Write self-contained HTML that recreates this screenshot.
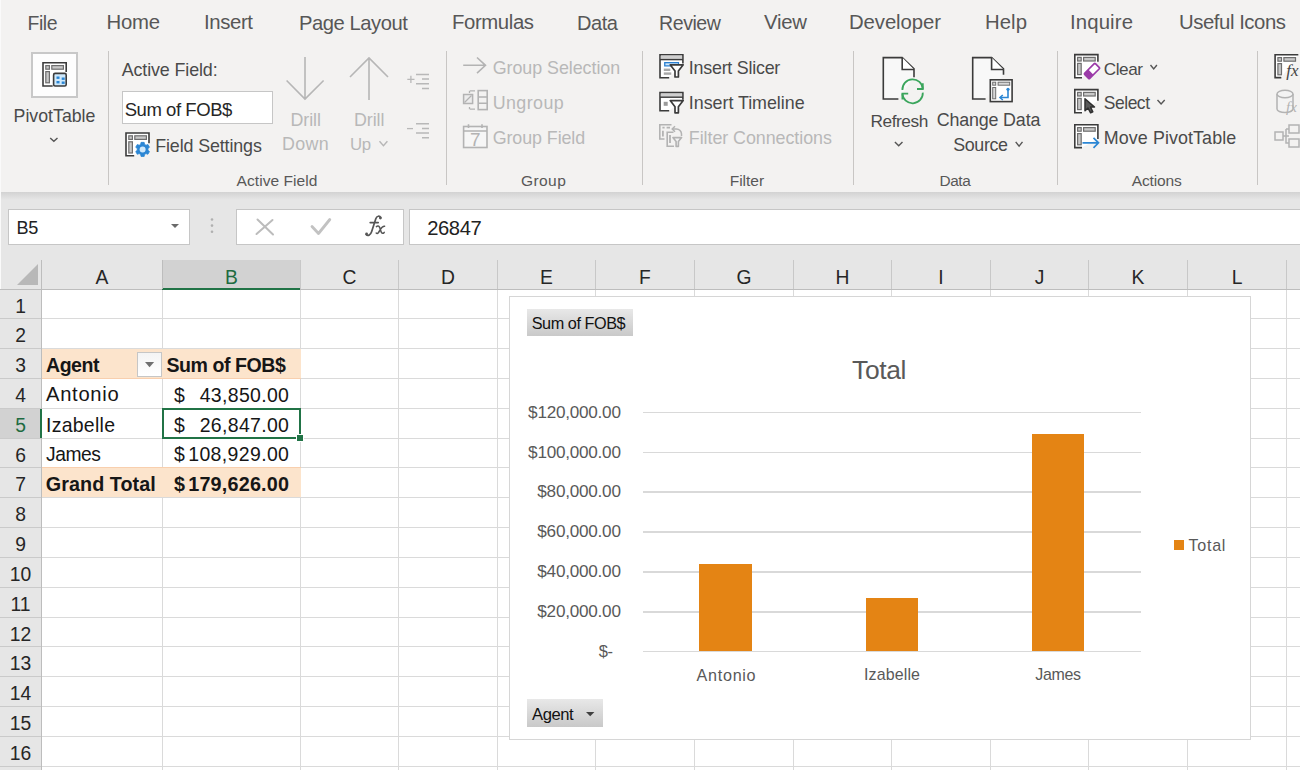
<!DOCTYPE html>
<html><head><meta charset="utf-8">
<style>
html,body{margin:0;padding:0;width:1300px;height:770px;overflow:hidden;background:#fff}
body{position:relative;font-family:"Liberation Sans",sans-serif}
.t{position:absolute;white-space:nowrap;line-height:normal}
.r{position:absolute}
</style></head><body>
<div class="r" style="left:0px;top:0px;width:1300px;height:192px;background:#f3f2f1;"></div>
<div class="r" style="left:0px;top:192px;width:1300px;height:98px;background:#e6e6e6;"></div>
<div class="r" style="left:0px;top:192px;width:1300px;height:8px;background:linear-gradient(#d2d2d2,#e6e6e6);"></div>
<div class="r" style="left:0px;top:0px;width:1px;height:770px;background:#fafafa;"></div>
<div class="t" style="left:27.50px;top:12.19px;font-size:19.46px;letter-spacing:-0.450px;color:#575757;">File</div>
<div class="t" style="left:106.50px;top:11.38px;font-size:20.35px;letter-spacing:-0.197px;color:#575757;">Home</div>
<div class="t" style="left:204.00px;top:11.38px;font-size:20.35px;letter-spacing:-0.378px;color:#575757;">Insert</div>
<div class="t" style="left:299.00px;top:11.51px;font-size:20.21px;letter-spacing:-0.450px;color:#575757;">Page Layout</div>
<div class="t" style="left:452.00px;top:11.38px;font-size:20.35px;letter-spacing:-0.402px;color:#575757;">Formulas</div>
<div class="t" style="left:577.00px;top:11.66px;font-size:20.04px;letter-spacing:-0.450px;color:#575757;">Data</div>
<div class="t" style="left:659.00px;top:12.08px;font-size:19.58px;letter-spacing:-0.450px;color:#575757;">Review</div>
<div class="t" style="left:764.00px;top:11.38px;font-size:20.35px;letter-spacing:-0.264px;color:#575757;">View</div>
<div class="t" style="left:849.00px;top:11.38px;font-size:20.35px;letter-spacing:-0.094px;color:#575757;">Developer</div>
<div class="t" style="left:985.00px;top:11.38px;font-size:20.35px;letter-spacing:0.047px;color:#575757;">Help</div>
<div class="t" style="left:1070.00px;top:11.38px;font-size:20.35px;letter-spacing:0.129px;color:#575757;">Inquire</div>
<div class="t" style="left:1179.00px;top:11.39px;font-size:20.35px;letter-spacing:-0.450px;color:#575757;">Useful Icons</div>
<div class="r" style="left:108.0px;top:51px;width:1px;height:134px;background:#c8c6c4;"></div>
<div class="r" style="left:445.8px;top:51px;width:1px;height:134px;background:#c8c6c4;"></div>
<div class="r" style="left:641.7px;top:51px;width:1px;height:134px;background:#c8c6c4;"></div>
<div class="r" style="left:853.3px;top:51px;width:1px;height:134px;background:#c8c6c4;"></div>
<div class="r" style="left:1057.0px;top:51px;width:1px;height:134px;background:#c8c6c4;"></div>
<div class="r" style="left:1257.2px;top:51px;width:1px;height:134px;background:#c8c6c4;"></div>
<div class="t" style="left:236.50px;top:172.43px;font-size:15.55px;letter-spacing:0.057px;color:#585858;">Active Field</div>
<div class="t" style="left:521.00px;top:171.63px;font-size:15.55px;letter-spacing:0.395px;color:#585858;">Group</div>
<div class="t" style="left:729.70px;top:171.63px;font-size:15.55px;letter-spacing:-0.011px;color:#585858;">Filter</div>
<div class="t" style="left:939.60px;top:171.76px;font-size:15.40px;letter-spacing:-0.450px;color:#585858;">Data</div>
<div class="t" style="left:1131.70px;top:171.63px;font-size:15.55px;letter-spacing:-0.149px;color:#585858;">Actions</div>
<div class="r" style="left:31px;top:52.4px;width:47px;height:45.2px;background:#fdfdfd;box-sizing:border-box;border:2px solid #c8c8c8;"></div>
<div class="t" style="left:13.60px;top:106.45px;font-size:17.73px;letter-spacing:0.009px;color:#4a4a4a;">PivotTable</div>
<div class="t" style="left:121.70px;top:60.22px;font-size:17.88px;letter-spacing:-0.114px;color:#4a4a4a;">Active Field:</div>
<div class="r" style="left:121.7px;top:91.4px;width:151.7px;height:33px;background:#fff;box-sizing:border-box;border:1px solid #c6c6c6;"></div>
<div class="t" style="left:124.70px;top:98.74px;font-size:18.52px;letter-spacing:-0.450px;color:#262626;">Sum of FOB$</div>
<div class="t" style="left:155.20px;top:136.42px;font-size:17.88px;letter-spacing:-0.117px;color:#4a4a4a;">Field Settings</div>
<div class="t" style="left:290.50px;top:109.62px;font-size:17.88px;letter-spacing:-0.071px;color:#b8b8b8;">Drill</div>
<div class="t" style="left:282.00px;top:134.42px;font-size:17.88px;letter-spacing:0.362px;color:#b8b8b8;">Down</div>
<div class="t" style="left:354.00px;top:109.62px;font-size:17.88px;letter-spacing:-0.071px;color:#b8b8b8;">Drill</div>
<div class="t" style="left:350.00px;top:135.41px;font-size:16.78px;letter-spacing:-0.450px;color:#b8b8b8;">Up</div>
<div class="t" style="left:492.70px;top:58.42px;font-size:17.88px;letter-spacing:-0.043px;color:#b8b8b8;">Group Selection</div>
<div class="t" style="left:492.70px;top:92.72px;font-size:17.88px;letter-spacing:0.420px;color:#b8b8b8;">Ungroup</div>
<div class="t" style="left:492.70px;top:127.82px;font-size:17.88px;letter-spacing:-0.081px;color:#b8b8b8;">Group Field</div>
<div class="t" style="left:688.80px;top:58.42px;font-size:17.88px;letter-spacing:-0.231px;color:#4a4a4a;">Insert Slicer</div>
<div class="t" style="left:688.80px;top:92.72px;font-size:17.88px;letter-spacing:-0.024px;color:#4a4a4a;">Insert Timeline</div>
<div class="t" style="left:688.80px;top:127.82px;font-size:17.88px;letter-spacing:-0.052px;color:#b8b8b8;">Filter Connections</div>
<div class="t" style="left:870.50px;top:110.76px;font-size:17.28px;letter-spacing:-0.450px;color:#4a4a4a;">Refresh</div>
<div class="t" style="left:936.70px;top:110.22px;font-size:17.88px;letter-spacing:-0.157px;color:#4a4a4a;">Change Data</div>
<div class="t" style="left:953.30px;top:135.02px;font-size:17.88px;letter-spacing:-0.387px;color:#4a4a4a;">Source</div>
<div class="t" style="left:1103.80px;top:59.07px;font-size:17.15px;letter-spacing:-0.450px;color:#4a4a4a;">Clear</div>
<div class="t" style="left:1103.80px;top:93.12px;font-size:17.43px;letter-spacing:-0.450px;color:#4a4a4a;">Select</div>
<div class="t" style="left:1103.80px;top:127.82px;font-size:17.88px;letter-spacing:0.095px;color:#4a4a4a;">Move PivotTable</div>
<div class="r" style="left:8px;top:209px;width:181.6px;height:36.2px;background:#fff;box-sizing:border-box;border:1px solid #c6c6c6;"></div>
<div class="t" style="left:16.60px;top:217.91px;font-size:18.11px;letter-spacing:-0.450px;color:#222;">B5</div>
<div class="r" style="left:236.2px;top:209px;width:167.7px;height:36px;background:#fff;box-sizing:border-box;border:1px solid #c6c6c6;"></div>
<div class="r" style="left:409px;top:209px;width:900px;height:35.6px;background:#fff;box-sizing:border-box;border:1px solid #c6c6c6;"></div>
<div class="t" style="left:427.30px;top:216.51px;font-size:20.21px;letter-spacing:-0.450px;color:#222;">26847</div>
<div class="r" style="left:41.5px;top:290px;width:1300px;height:480px;background:#fff;"></div>
<div class="r" style="left:0px;top:290px;width:41.5px;height:480px;background:#e6e6e6;"></div>
<div class="r" style="left:42px;top:318px;width:1300px;height:1px;background:#dadada;"></div>
<div class="r" style="left:0px;top:318px;width:41px;height:1px;background:#cacaca;"></div>
<div class="r" style="left:42px;top:348px;width:1300px;height:1px;background:#dadada;"></div>
<div class="r" style="left:0px;top:348px;width:41px;height:1px;background:#cacaca;"></div>
<div class="r" style="left:42px;top:378px;width:1300px;height:1px;background:#dadada;"></div>
<div class="r" style="left:0px;top:378px;width:41px;height:1px;background:#cacaca;"></div>
<div class="r" style="left:42px;top:408px;width:1300px;height:1px;background:#dadada;"></div>
<div class="r" style="left:0px;top:408px;width:41px;height:1px;background:#cacaca;"></div>
<div class="r" style="left:42px;top:438px;width:1300px;height:1px;background:#dadada;"></div>
<div class="r" style="left:0px;top:438px;width:41px;height:1px;background:#cacaca;"></div>
<div class="r" style="left:42px;top:467px;width:1300px;height:1px;background:#dadada;"></div>
<div class="r" style="left:0px;top:467px;width:41px;height:1px;background:#cacaca;"></div>
<div class="r" style="left:42px;top:497px;width:1300px;height:1px;background:#dadada;"></div>
<div class="r" style="left:0px;top:497px;width:41px;height:1px;background:#cacaca;"></div>
<div class="r" style="left:42px;top:527px;width:1300px;height:1px;background:#dadada;"></div>
<div class="r" style="left:0px;top:527px;width:41px;height:1px;background:#cacaca;"></div>
<div class="r" style="left:42px;top:557px;width:1300px;height:1px;background:#dadada;"></div>
<div class="r" style="left:0px;top:557px;width:41px;height:1px;background:#cacaca;"></div>
<div class="r" style="left:42px;top:587px;width:1300px;height:1px;background:#dadada;"></div>
<div class="r" style="left:0px;top:587px;width:41px;height:1px;background:#cacaca;"></div>
<div class="r" style="left:42px;top:617px;width:1300px;height:1px;background:#dadada;"></div>
<div class="r" style="left:0px;top:617px;width:41px;height:1px;background:#cacaca;"></div>
<div class="r" style="left:42px;top:646px;width:1300px;height:1px;background:#dadada;"></div>
<div class="r" style="left:0px;top:646px;width:41px;height:1px;background:#cacaca;"></div>
<div class="r" style="left:42px;top:676px;width:1300px;height:1px;background:#dadada;"></div>
<div class="r" style="left:0px;top:676px;width:41px;height:1px;background:#cacaca;"></div>
<div class="r" style="left:42px;top:706px;width:1300px;height:1px;background:#dadada;"></div>
<div class="r" style="left:0px;top:706px;width:41px;height:1px;background:#cacaca;"></div>
<div class="r" style="left:42px;top:736px;width:1300px;height:1px;background:#dadada;"></div>
<div class="r" style="left:0px;top:736px;width:41px;height:1px;background:#cacaca;"></div>
<div class="r" style="left:42px;top:766px;width:1300px;height:1px;background:#dadada;"></div>
<div class="r" style="left:0px;top:766px;width:41px;height:1px;background:#cacaca;"></div>
<div class="r" style="left:162px;top:290px;width:1px;height:480px;background:#dadada;"></div>
<div class="r" style="left:162px;top:260px;width:1px;height:30px;background:#c8c8c8;"></div>
<div class="r" style="left:300px;top:290px;width:1px;height:480px;background:#dadada;"></div>
<div class="r" style="left:300px;top:260px;width:1px;height:30px;background:#c8c8c8;"></div>
<div class="r" style="left:398px;top:290px;width:1px;height:480px;background:#dadada;"></div>
<div class="r" style="left:398px;top:260px;width:1px;height:30px;background:#c8c8c8;"></div>
<div class="r" style="left:497px;top:290px;width:1px;height:480px;background:#dadada;"></div>
<div class="r" style="left:497px;top:260px;width:1px;height:30px;background:#c8c8c8;"></div>
<div class="r" style="left:595px;top:290px;width:1px;height:480px;background:#dadada;"></div>
<div class="r" style="left:595px;top:260px;width:1px;height:30px;background:#c8c8c8;"></div>
<div class="r" style="left:694px;top:290px;width:1px;height:480px;background:#dadada;"></div>
<div class="r" style="left:694px;top:260px;width:1px;height:30px;background:#c8c8c8;"></div>
<div class="r" style="left:793px;top:290px;width:1px;height:480px;background:#dadada;"></div>
<div class="r" style="left:793px;top:260px;width:1px;height:30px;background:#c8c8c8;"></div>
<div class="r" style="left:891px;top:290px;width:1px;height:480px;background:#dadada;"></div>
<div class="r" style="left:891px;top:260px;width:1px;height:30px;background:#c8c8c8;"></div>
<div class="r" style="left:990px;top:290px;width:1px;height:480px;background:#dadada;"></div>
<div class="r" style="left:990px;top:260px;width:1px;height:30px;background:#c8c8c8;"></div>
<div class="r" style="left:1088px;top:290px;width:1px;height:480px;background:#dadada;"></div>
<div class="r" style="left:1088px;top:260px;width:1px;height:30px;background:#c8c8c8;"></div>
<div class="r" style="left:1187px;top:290px;width:1px;height:480px;background:#dadada;"></div>
<div class="r" style="left:1187px;top:260px;width:1px;height:30px;background:#c8c8c8;"></div>
<div class="r" style="left:1286px;top:290px;width:1px;height:480px;background:#dadada;"></div>
<div class="r" style="left:1286px;top:260px;width:1px;height:30px;background:#c8c8c8;"></div>
<div class="r" style="left:0px;top:289px;width:1300px;height:1px;background:#bdbdbd;"></div>
<div class="r" style="left:41px;top:260px;width:1px;height:510px;background:#bdbdbd;"></div>
<div class="r" style="left:162px;top:260px;width:138px;height:29px;background:#d2d2d2;"></div>
<div class="r" style="left:162px;top:287.5px;width:138px;height:2px;background:#217346;"></div>
<div class="r" style="left:162px;top:260px;width:1px;height:29px;background:#bdbdbd;"></div>
<div class="r" style="left:0px;top:409px;width:41px;height:29px;background:#d2d2d2;"></div>
<div class="r" style="left:39.5px;top:409px;width:2px;height:29px;background:#217346;"></div>
<svg class="r" style="left:17px;top:264px" width="22" height="22"><polygon points="21,0 21,21 0,21" fill="#b8b8b8"/></svg>
<div class="t" style="left:72.0px;width:60px;text-align:center;top:266.8px;font-size:19.3px;color:#262626">A</div>
<div class="t" style="left:201.5px;width:60px;text-align:center;top:266.8px;font-size:19.3px;color:#1e6b41">B</div>
<div class="t" style="left:319.5px;width:60px;text-align:center;top:266.8px;font-size:19.3px;color:#262626">C</div>
<div class="t" style="left:418.0px;width:60px;text-align:center;top:266.8px;font-size:19.3px;color:#262626">D</div>
<div class="t" style="left:516.5px;width:60px;text-align:center;top:266.8px;font-size:19.3px;color:#262626">E</div>
<div class="t" style="left:615.0px;width:60px;text-align:center;top:266.8px;font-size:19.3px;color:#262626">F</div>
<div class="t" style="left:714.0px;width:60px;text-align:center;top:266.8px;font-size:19.3px;color:#262626">G</div>
<div class="t" style="left:812.5px;width:60px;text-align:center;top:266.8px;font-size:19.3px;color:#262626">H</div>
<div class="t" style="left:911.0px;width:60px;text-align:center;top:266.8px;font-size:19.3px;color:#262626">I</div>
<div class="t" style="left:1009.5px;width:60px;text-align:center;top:266.8px;font-size:19.3px;color:#262626">J</div>
<div class="t" style="left:1108.0px;width:60px;text-align:center;top:266.8px;font-size:19.3px;color:#262626">K</div>
<div class="t" style="left:1207.0px;width:60px;text-align:center;top:266.8px;font-size:19.3px;color:#262626">L</div>
<div class="t" style="left:0px;width:41px;text-align:center;top:295.5px;font-size:19.3px;color:#262626">1</div>
<div class="t" style="left:0px;width:41px;text-align:center;top:325.0px;font-size:19.3px;color:#262626">2</div>
<div class="t" style="left:0px;width:41px;text-align:center;top:355.0px;font-size:19.3px;color:#262626">3</div>
<div class="t" style="left:0px;width:41px;text-align:center;top:385.0px;font-size:19.3px;color:#262626">4</div>
<div class="t" style="left:0px;width:41px;text-align:center;top:415.0px;font-size:19.3px;color:#1e6b41">5</div>
<div class="t" style="left:0px;width:41px;text-align:center;top:444.5px;font-size:19.3px;color:#262626">6</div>
<div class="t" style="left:0px;width:41px;text-align:center;top:474.0px;font-size:19.3px;color:#262626">7</div>
<div class="t" style="left:0px;width:41px;text-align:center;top:504.0px;font-size:19.3px;color:#262626">8</div>
<div class="t" style="left:0px;width:41px;text-align:center;top:534.0px;font-size:19.3px;color:#262626">9</div>
<div class="t" style="left:0px;width:41px;text-align:center;top:564.0px;font-size:19.3px;color:#262626">10</div>
<div class="t" style="left:0px;width:41px;text-align:center;top:594.0px;font-size:19.3px;color:#262626">11</div>
<div class="t" style="left:0px;width:41px;text-align:center;top:623.5px;font-size:19.3px;color:#262626">12</div>
<div class="t" style="left:0px;width:41px;text-align:center;top:653.0px;font-size:19.3px;color:#262626">13</div>
<div class="t" style="left:0px;width:41px;text-align:center;top:683.0px;font-size:19.3px;color:#262626">14</div>
<div class="t" style="left:0px;width:41px;text-align:center;top:713.0px;font-size:19.3px;color:#262626">15</div>
<div class="t" style="left:0px;width:41px;text-align:center;top:743.0px;font-size:19.3px;color:#262626">16</div>
<div class="r" style="left:42px;top:349px;width:259px;height:30px;background:#fce4cc;border-bottom:1px solid #f8cfae;box-sizing:border-box;"></div>
<div class="r" style="left:42px;top:467px;width:259px;height:30px;background:#fce4cc;border-top:1px solid #f8cfae;box-sizing:border-box;"></div>
<div class="r" style="left:136.6px;top:352.3px;width:25px;height:24.7px;background:linear-gradient(#f4f4f4,#fff);box-sizing:border-box;border:1px solid #c6c6c6;"></div>
<svg class="r" style="left:144.7px;top:362px" width="10" height="6"><polygon points="0,0 9.1,0 4.55,5.3" fill="#707070"/></svg>
<div class="t" style="left:46.00px;top:354.13px;font-size:19.52px;letter-spacing:-0.450px;color:#161616;font-weight:700;">Agent</div>
<div class="t" style="left:166.40px;top:354.47px;font-size:19.59px;letter-spacing:-0.450px;color:#161616;font-weight:700;">Sum of FOB$</div>
<div class="t" style="left:46.00px;top:383.40px;font-size:20.22px;letter-spacing:0.700px;color:#161616;">Antonio</div>
<div class="t" style="left:46.00px;top:413.87px;font-size:19.48px;letter-spacing:0.266px;color:#161616;">Izabelle</div>
<div class="t" style="left:46.00px;top:443.85px;font-size:19.29px;letter-spacing:-0.450px;color:#161616;">James</div>
<div class="t" style="left:45.80px;top:473.11px;font-size:19.77px;letter-spacing:0.055px;color:#161616;font-weight:700;">Grand Total</div>
<div class="t" style="left:174.00px;top:383.67px;font-size:19.48px;letter-spacing:0.000px;color:#161616;">$</div>
<div class="t" style="left:199.70px;top:383.67px;font-size:19.48px;letter-spacing:0.331px;color:#161616;">43,850.00</div>
<div class="t" style="left:174.00px;top:413.57px;font-size:19.48px;letter-spacing:0.000px;color:#161616;">$</div>
<div class="t" style="left:199.70px;top:413.57px;font-size:19.48px;letter-spacing:0.331px;color:#161616;">26,847.00</div>
<div class="t" style="left:174.00px;top:443.47px;font-size:19.48px;letter-spacing:0.000px;color:#161616;">$</div>
<div class="t" style="left:188.20px;top:443.47px;font-size:19.48px;letter-spacing:0.369px;color:#161616;">108,929.00</div>
<div class="t" style="left:174.00px;top:472.81px;font-size:19.77px;letter-spacing:0.000px;color:#161616;font-weight:700;">$</div>
<div class="t" style="left:188.20px;top:472.81px;font-size:19.77px;letter-spacing:0.207px;color:#161616;font-weight:700;">179,626.00</div>
<div class="r" style="left:161.6px;top:407.5px;width:139.9px;height:31.8px;background:transparent;box-sizing:border-box;border:2px solid #217346;"></div>
<div class="r" style="left:297.4px;top:435.2px;width:5.6px;height:5.6px;background:#217346;outline:1px solid #fff;"></div>
<div class="r" style="left:509px;top:296px;width:741.5px;height:443.5px;background:#fff;box-sizing:border-box;border:1.5px solid #d6d6d6;"></div>
<div class="r" style="left:527px;top:309.2px;width:106.1px;height:26.5px;background:linear-gradient(#e8e8e8,#c9c9c9);"></div>
<div class="t" style="left:531.70px;top:313.99px;font-size:16.26px;letter-spacing:-0.450px;color:#111;">Sum of FOB$</div>
<div class="t" style="left:852.00px;top:355.26px;font-size:26.45px;letter-spacing:-0.342px;color:#595959;">Total</div>
<div class="r" style="left:643px;top:411.7px;width:498px;height:1.6px;background:#d9d9d9;"></div>
<div class="t" style="left:528.10px;top:401.78px;font-size:17.15px;letter-spacing:-0.248px;color:#595959;">$120,000.00</div>
<div class="r" style="left:643px;top:451.55px;width:498px;height:1.6px;background:#d9d9d9;"></div>
<div class="t" style="left:528.10px;top:441.63px;font-size:17.15px;letter-spacing:-0.248px;color:#595959;">$100,000.00</div>
<div class="r" style="left:643px;top:491.4px;width:498px;height:1.6px;background:#d9d9d9;"></div>
<div class="t" style="left:537.30px;top:481.48px;font-size:17.15px;letter-spacing:-0.238px;color:#595959;">$80,000.00</div>
<div class="r" style="left:643px;top:531.25px;width:498px;height:1.6px;background:#d9d9d9;"></div>
<div class="t" style="left:537.30px;top:521.33px;font-size:17.15px;letter-spacing:-0.238px;color:#595959;">$60,000.00</div>
<div class="r" style="left:643px;top:571.1px;width:498px;height:1.6px;background:#d9d9d9;"></div>
<div class="t" style="left:537.30px;top:561.18px;font-size:17.15px;letter-spacing:-0.238px;color:#595959;">$40,000.00</div>
<div class="r" style="left:643px;top:610.95px;width:498px;height:1.6px;background:#d9d9d9;"></div>
<div class="t" style="left:537.30px;top:601.03px;font-size:17.15px;letter-spacing:-0.238px;color:#595959;">$20,000.00</div>
<div class="r" style="left:643px;top:650.7px;width:498px;height:1.6px;background:#d9d9d9;"></div>
<div class="t" style="left:598.80px;top:641.59px;font-size:16.48px;letter-spacing:-0.450px;color:#595959;">$-</div>
<div class="r" style="left:699.2px;top:564.13px;width:52.6px;height:87.37px;background:#e48414;"></div>
<div class="r" style="left:865.7px;top:598.01px;width:52.6px;height:53.49px;background:#e48414;"></div>
<div class="r" style="left:1031.9px;top:434.46px;width:52.6px;height:217.04px;background:#e48414;"></div>
<div class="t" style="left:696.60px;top:665.78px;font-size:16.16px;letter-spacing:0.700px;color:#595959;">Antonio</div>
<div class="t" style="left:864.00px;top:665.93px;font-size:15.99px;letter-spacing:0.127px;color:#595959;">Izabelle</div>
<div class="t" style="left:1035.30px;top:666.13px;font-size:15.99px;letter-spacing:-0.346px;color:#595959;">James</div>
<div class="r" style="left:1173.8px;top:540.3px;width:9.8px;height:9.8px;background:#e48414;"></div>
<div class="t" style="left:1188.60px;top:536.23px;font-size:16.10px;letter-spacing:0.700px;color:#595959;">Total</div>
<div class="r" style="left:526.9px;top:699.3px;width:75.7px;height:27.5px;background:linear-gradient(#e8e8e8,#c9c9c9);"></div>
<div class="t" style="left:532.00px;top:704.97px;font-size:16.61px;letter-spacing:-0.450px;color:#111;">Agent</div>
<svg class="r" style="left:585.6px;top:712px" width="9" height="5"><polygon points="0,0 8.4,0 4.2,4.2" fill="#404040"/></svg>
<svg class="r" style="left:0;top:0" width="1300" height="770"><path d="M52.7,86 H43.0 V62.8 H66.2 V72" fill="#fff" stroke="#3b3b3b" stroke-width="1.6"/><rect x="45.800000000000004" y="65.6" width="3.6" height="3.6" fill="#c9c9c9" stroke="#6e6e6e" stroke-width="1.2"/><rect x="51.800000000000004" y="65.6" width="11.6" height="3.6" fill="#c9c9c9" stroke="#6e6e6e" stroke-width="1.2"/><rect x="45.800000000000004" y="71.6" width="3.6" height="11.2" fill="#c9c9c9" stroke="#6e6e6e" stroke-width="1.2"/><rect x="53.6" y="73.4" width="12.6" height="12.6" rx="1.5" fill="#cfe9fb" stroke="#3b3b3b" stroke-width="1.6"/><rect x="56.5" y="76.5" width="3" height="2.4" fill="#2b86d4"/><rect x="56.5" y="81" width="3" height="2.4" fill="#2b86d4"/><rect x="61.7" y="77.5" width="3" height="2.4" fill="#2b86d4"/><rect x="61.7" y="81.5" width="3" height="2.4" fill="#2b86d4"/><path d="M134.2,155.79999999999998 H126.0 V133.0 H149.0 V143.2" fill="#fff" stroke="#3b3b3b" stroke-width="1.6"/><rect x="128.8" y="135.79999999999998" width="3.6" height="3.6" fill="#c9c9c9" stroke="#6e6e6e" stroke-width="1.2"/><rect x="134.8" y="135.79999999999998" width="11.6" height="3.6" fill="#c9c9c9" stroke="#6e6e6e" stroke-width="1.2"/><rect x="128.8" y="141.79999999999998" width="3.6" height="11.2" fill="#c9c9c9" stroke="#6e6e6e" stroke-width="1.2"/><polygon points="140.70,144.35 141.03,142.37 144.17,142.37 144.50,144.35 146.03,145.23 147.90,144.53 149.47,147.25 147.93,148.52 147.93,150.28 149.47,151.55 147.90,154.27 146.03,153.57 144.50,154.45 144.17,156.43 141.03,156.43 140.70,154.45 139.17,153.57 137.30,154.27 135.73,151.55 137.27,150.28 137.27,148.52 135.73,147.25 137.30,144.53 139.17,145.23" fill="#2b86d4" stroke="#2b86d4" stroke-width="0.8" stroke-linejoin="round"/><circle cx="142.6" cy="149.4" r="3" fill="#cfe8fb"/><path d="M305,57 V99 M286.6,80.5 L305,99 L323.6,80.5" fill="none" stroke="#b6b6b6" stroke-width="1.6"/><path d="M369,100 V58 M350,77 L369,58 L388,77" fill="none" stroke="#b6b6b6" stroke-width="1.6"/><path d="M379.5,141.3 L383.45,145.8 L387.4,141.3" fill="none" stroke="#b6b6b6" stroke-width="1.4"/><path d="M407.3,79.3 H414.5 M410.9,75.7 V82.9" stroke="#b8b8b8" stroke-width="1.3"/><path d="M416,74.6 H429 M422,79.1 H429 M416,83.8 H429 M422,88.4 H429" stroke="#b8b8b8" stroke-width="1.5"/><path d="M407,128.6 H413" stroke="#b8b8b8" stroke-width="1.3"/><path d="M416,123.7 H429 M422,128.4 H429 M416,133.1 H429 M422,137.8 H429" stroke="#b8b8b8" stroke-width="1.5"/><path d="M50.2,138.0 L53.85,141.3 L57.5,138.0" fill="none" stroke="#555" stroke-width="1.4"/><path d="M463.2,65.3 H485.5 M477,57.5 L485.5,65.3 L477,73.2" fill="none" stroke="#b3b3b3" stroke-width="1.6"/><rect x="463.6" y="94.5" width="9" height="9" fill="#ececec" stroke="#b3b3b3" stroke-width="1.5"/><path d="M464.5,102.5 L471.5,95.5" stroke="#b3b3b3" stroke-width="1.3"/><path d="M470,90.8 H475 M470,109.2 H475 M469.5,90.8 V93 M469.5,107 V109.2" stroke="#b3b3b3" stroke-width="1.3" fill="none"/><rect x="478.2" y="90.6" width="9" height="19" fill="none" stroke="#b3b3b3" stroke-width="1.6"/><path d="M478.2,97 H487.2 M478.2,103.3 H487.2" stroke="#b3b3b3" stroke-width="1.5"/><rect x="463.6" y="126.5" width="23.4" height="21" fill="#f6f6f6" stroke="#b3b3b3" stroke-width="1.6"/><path d="M463.6,131 H487 M468.5,124.2 V128 M482,124.2 V128" stroke="#b3b3b3" stroke-width="1.6"/><text x="475.3" y="146.2" font-family="Liberation Sans" font-size="19" fill="#b3b3b3" text-anchor="middle">7</text><path d="M669.2,77.7 H660.0 V54.8 H682.9000000000001 V63.5" fill="#fff" stroke="#3b3b3b" stroke-width="1.6"/><rect x="660.8000000000001" y="55.6" width="21.3" height="4" fill="#cfcfcf"/><path d="M660.0,59.6 H682.9000000000001" stroke="#3b3b3b" stroke-width="1.4"/><rect x="664.1" y="62" width="15" height="4.5" fill="#2b7fd0"/><rect x="665.4000000000001" y="63.3" width="12.5" height="2" fill="#cde6fa"/><rect x="663.8000000000001" y="68.6" width="6.5" height="2.4" fill="#a8a8a8"/><rect x="663.8000000000001" y="72.4" width="7.5" height="2.4" fill="#a8a8a8"/><path d="M670.2,64.8 H683.2 L678.4000000000001,71.0 V77.0 H675.0 V71.0 Z" fill="#fff" stroke="#3b3b3b" stroke-width="1.7" stroke-linejoin="round"/><path d="M669.2,110.8 H660.0 V92.6 H682.9000000000001 V99.8" fill="#fff" stroke="#3b3b3b" stroke-width="1.6"/><rect x="660.8000000000001" y="93.39999999999999" width="21.3" height="3.8" fill="#cfcfcf"/><path d="M660.0,97.2 H682.9000000000001" stroke="#3b3b3b" stroke-width="1.4"/><rect x="663.7" y="101.8" width="4" height="4" fill="#9a9a9a"/><path d="M670.2,100.6 H683.2 L678.4000000000001,106.8 V112.8 H675.0 V106.8 Z" fill="#fff" stroke="#3b3b3b" stroke-width="1.7" stroke-linejoin="round"/><path d="M664.5,139 H659.8 V124.8 H671.5" fill="none" stroke="#b3b3b3" stroke-width="1.6"/><path d="M662.4,127.6 H664.6 M666.6,127.6 H670 M662.9,130.8 V136.5" stroke="#b3b3b3" stroke-width="1.8"/><path d="M674,146.2 H667.2 V132.2 H673.5" fill="none" stroke="#b3b3b3" stroke-width="1.6"/><path d="M670,135 V143" stroke="#b3b3b3" stroke-width="1.8"/><path d="M672.3,129 H676.5 A5,5 0 0 1 681.5,134 V136" fill="none" stroke="#b3b3b3" stroke-width="1.5"/><path d="M675,126.2 L672.2,129 L675,131.8" fill="none" stroke="#b3b3b3" stroke-width="1.5"/><path d="M672.9,137.6 H681.6 L678.4,141.6 V146.4 H676.1 V141.6 Z" fill="#f3f3f3" stroke="#b3b3b3" stroke-width="1.6" stroke-linejoin="round"/><path d="M898.4,99 H883.3 V57.6 H902.2 L914,68.8 V77.3" fill="#f8f8f8" stroke="#3b3b3b" stroke-width="1.6" stroke-linejoin="miter"/><path d="M902.2,57.6 V69.5 H914" fill="#fff" stroke="#3b3b3b" stroke-width="1.6"/><path d="M902.4,90 A10.2,10.2 0 0 1 922.8,89" fill="none" stroke="#3aa55c" stroke-width="1.8"/><path d="M917,89 H922.8 V83.2" fill="none" stroke="#3aa55c" stroke-width="1.8"/><path d="M922.8,92.6 A10.2,10.2 0 0 1 902.4,93.6" fill="none" stroke="#3aa55c" stroke-width="1.8"/><path d="M908.2,93.6 H902.4 V99.4" fill="none" stroke="#3aa55c" stroke-width="1.8"/><path d="M894.9,141.9 L898.7,145.8 L902.5,141.9" fill="none" stroke="#555" stroke-width="1.4"/><path d="M985.6,99 H972.7 V57.6 H991.6 L1003.5,68.8 V74.8" fill="#f8f8f8" stroke="#3b3b3b" stroke-width="1.6"/><path d="M991.6,57.6 V69.5 H1003.5" fill="#fff" stroke="#3b3b3b" stroke-width="1.6"/><rect x="990.3" y="79.8" width="21.8" height="21.8" fill="#fff" stroke="#3b3b3b" stroke-width="1.6"/><rect x="992.7" y="82.2" width="3" height="3" fill="#d8d8d8" stroke="#6e6e6e" stroke-width="1"/><rect x="998.1" y="82.2" width="11.6" height="3" fill="#d8d8d8" stroke="#6e6e6e" stroke-width="1"/><rect x="992.7" y="87.5" width="3" height="11.3" fill="#d8d8d8" stroke="#6e6e6e" stroke-width="1"/><path d="M1008,89.5 V97.5 H1000.5" fill="none" stroke="#2b86d4" stroke-width="1.6"/><circle cx="1008" cy="89.3" r="1.6" fill="#2b86d4"/><path d="M1002.8,95 L1000,97.5 L1002.8,100" fill="none" stroke="#2b86d4" stroke-width="1.6"/><path d="M1015.7,141.9 L1019.1,146.2 L1022.5,141.9" fill="none" stroke="#555" stroke-width="1.4"/><path d="M1082,77.69999999999999 H1074.8 V54.599999999999994 H1097.9 V61.8" fill="#fff" stroke="#3b3b3b" stroke-width="1.6"/><rect x="1077.6" y="57.4" width="3.6" height="3.6" fill="#c9c9c9" stroke="#6e6e6e" stroke-width="1.2"/><rect x="1083.6" y="57.4" width="11.6" height="3.6" fill="#c9c9c9" stroke="#6e6e6e" stroke-width="1.2"/><rect x="1077.6" y="63.4" width="3.6" height="11.2" fill="#c9c9c9" stroke="#6e6e6e" stroke-width="1.2"/><g transform="translate(1092,71) rotate(-45)"><rect x="-7.6" y="-3.6" width="15.2" height="7.2" rx="0.8" fill="#fff" stroke="#9b3aa8" stroke-width="1.7"/><rect x="-7.6" y="-3.6" width="6" height="7.2" fill="#9b3aa8"/></g><path d="M1150.5,65.0 L1153.7,68.9 L1156.9,65.0" fill="none" stroke="#555" stroke-width="1.4"/><path d="M1082,112.69999999999999 H1074.8 V89.6 H1097.9 V100.8" fill="#fff" stroke="#3b3b3b" stroke-width="1.6"/><rect x="1077.6" y="92.39999999999999" width="3.6" height="3.6" fill="#c9c9c9" stroke="#6e6e6e" stroke-width="1.2"/><rect x="1083.6" y="92.39999999999999" width="11.6" height="3.6" fill="#c9c9c9" stroke="#6e6e6e" stroke-width="1.2"/><rect x="1077.6" y="98.39999999999999" width="3.6" height="11.2" fill="#c9c9c9" stroke="#6e6e6e" stroke-width="1.2"/><path d="M1085,98.8 V110.8 L1088,108.0 L1090.6,112.8 L1092.8,111.8 L1090.5,107.1 H1094.5 Z" fill="#5a5a5a" stroke="#303030" stroke-width="1.5" stroke-linejoin="round"/><path d="M1157.5,100.0 L1161.1,103.9 L1164.7,100.0" fill="none" stroke="#555" stroke-width="1.4"/><path d="M1082,147.6 H1074.8 V124.8 H1097.9 V139" fill="#fff" stroke="#3b3b3b" stroke-width="1.6"/><rect x="1077.6" y="127.6" width="3.6" height="3.6" fill="#c9c9c9" stroke="#6e6e6e" stroke-width="1.2"/><rect x="1083.6" y="127.6" width="11.6" height="3.6" fill="#c9c9c9" stroke="#6e6e6e" stroke-width="1.2"/><rect x="1077.6" y="133.6" width="3.6" height="11.2" fill="#c9c9c9" stroke="#6e6e6e" stroke-width="1.2"/><path d="M1082.5,142.8 H1098.5 M1093.5,137.8 L1098.5,142.8 L1093.5,147.8" fill="none" stroke="#2b86d4" stroke-width="1.7"/><path d="M1281.3,77.6 H1275.1 V54.8 H1298.3" fill="#fff" stroke="#3b3b3b" stroke-width="1.6"/><rect x="1277.8999999999999" y="57.6" width="3.6" height="3.6" fill="#c9c9c9" stroke="#6e6e6e" stroke-width="1.2"/><rect x="1283.8999999999999" y="57.6" width="11.6" height="3.6" fill="#c9c9c9" stroke="#6e6e6e" stroke-width="1.2"/><rect x="1277.8999999999999" y="63.6" width="3.6" height="11.2" fill="#c9c9c9" stroke="#6e6e6e" stroke-width="1.2"/><text x="1286.3" y="76" font-family="Liberation Serif" font-style="italic" font-size="17" fill="#444">fx</text><path d="M1277,94 V109 A8,3.5 0 0 0 1293,109 V94" fill="#f3f3f3" stroke="#b3b3b3" stroke-width="1.5"/><ellipse cx="1285" cy="94" rx="8" ry="3.8" fill="#f3f3f3" stroke="#b3b3b3" stroke-width="1.5"/><text x="1286" y="112" font-family="Liberation Serif" font-style="italic" font-size="15" fill="#b3b3b3">fx</text><rect x="1275" y="132" width="8" height="8" fill="none" stroke="#b3b3b3" stroke-width="1.5"/><rect x="1289" y="125" width="10" height="8" fill="none" stroke="#b3b3b3" stroke-width="1.5"/><rect x="1289" y="139" width="10" height="8" fill="none" stroke="#b3b3b3" stroke-width="1.5"/><path d="M1283,136 H1289 M1286,129 V143 H1289 M1286,129 H1289" fill="none" stroke="#b3b3b3" stroke-width="1.5"/><polygon points="171,224 179,224 175,228" fill="#6a6a6a"/><circle cx="212" cy="219.5" r="1.3" fill="#b0b0b0"/><circle cx="212" cy="225.6" r="1.3" fill="#b0b0b0"/><circle cx="212" cy="231.7" r="1.3" fill="#b0b0b0"/><path d="M257.5,219.5 L273,234.5 M272.5,220 L256.5,234" stroke="#bcbcbc" stroke-width="2" stroke-linecap="round"/><path d="M312,226.5 L318.5,233.5 L329.8,219.5" fill="none" stroke="#c2c2c2" stroke-width="2.8" stroke-linecap="round" stroke-linejoin="round"/><path d="M380.6,217.6 C379.8,215.6 376.8,215.6 375.8,218.8 L371.6,231.8 C370.6,235.2 367.6,236.4 366.2,234.4 M370.2,222.6 H378.2" fill="none" stroke="#555" stroke-width="1.7" stroke-linecap="round"/><circle cx="380.4" cy="218" r="1.4" fill="#555"/><circle cx="366.6" cy="234" r="1.4" fill="#555"/><path d="M376.4,226.6 C378.2,225.2 379.4,226.4 380,228.4 L381.2,232 C381.8,233.8 383.2,233.6 384.2,232.4 M384.6,226.2 C383,226 381.5,227.5 380.4,229.5 L378.5,232.5 C377.8,233.6 376.8,233.6 376.2,233" fill="none" stroke="#555" stroke-width="1.5" stroke-linecap="round"/></svg>
</body></html>
